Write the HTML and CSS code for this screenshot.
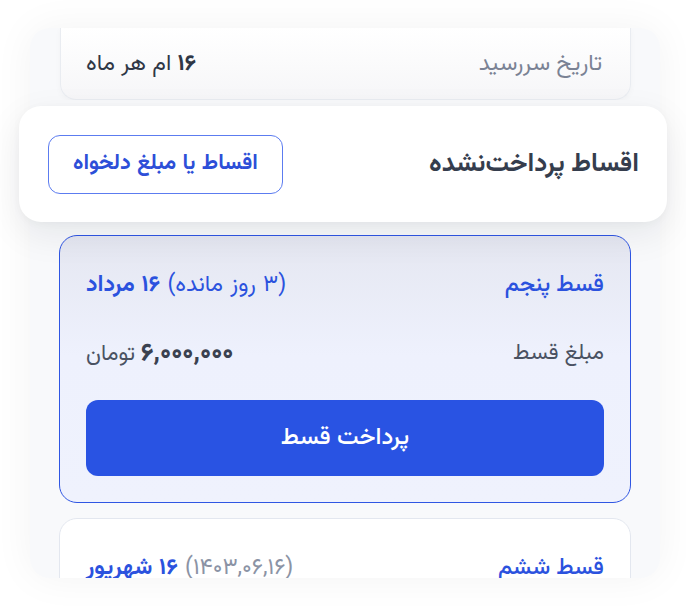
FILE: index.html
```html
<!DOCTYPE html>
<html lang="fa" dir="rtl">
<head>
<meta charset="utf-8">
<title>اقساط</title>
<link rel="stylesheet" href="styles.css">
</head>
<body>
<div class="stage">
  <div class="panel">
    <div class="clip-top">
      <div class="info-card">
        <span class="label">تاریخ سررسید</span>
        <span class="value"><b>۱۶</b> ام هر ماه</span>
      </div>
    </div>

    <div class="head-card">
      <h2 class="head-title">اقساط پرداخت‌نشده</h2>
      <button class="outline-btn">اقساط یا مبلغ دلخواه</button>
    </div>

    <div class="clip-bottom">
      <div class="inst-card active">
        <div class="row">
          <span class="inst-name">قسط پنجم</span>
          <span class="inst-date"><span class="remain">(۳ روز مانده)</span> <b>۱۶ مرداد</b></span>
        </div>
        <div class="row row-amount">
          <span class="label-dark">مبلغ قسط</span>
          <span class="amount"><b>۶,۰۰۰,۰۰۰</b> تومان</span>
        </div>
        <button class="pay-btn">پرداخت قسط</button>
      </div>

      <div class="inst-card">
        <div class="row">
          <span class="inst-name">قسط ششم</span>
          <span class="inst-date"><span class="muted">(۱۴۰۳,۰۶,۱۶)</span> <b>۱۶ شهریور</b></span>
        </div>
      </div>
    </div>
  </div>
</div>
</body>
</html>
```

FILE: styles.css
```css
* { box-sizing: border-box; }
html, body { margin: 0; padding: 0; background: #ffffff; }
body {
  font-family: "Vazirmatn", "Noto Sans Arabic", "DejaVu Sans", sans-serif;
  width: 686px;
  height: 607px;
  overflow: hidden;
}
.stage {
  padding: 28px 26px 0 30px;
}
.panel {
  width: 630px;
  height: 550px;
  display: flex;
  flex-direction: column;
  background: #f8f9fb;
  border-radius: 20px;
  box-shadow: 0 0 40px rgba(16, 24, 40, 0.05);
}
.clip-top {
  height: 72px;
  overflow: hidden;
  border-radius: 20px 20px 0 0;
  padding: 0 29px 0 30px;
}
.info-card {
  height: 72px;
  display: flex;
  align-items: center;
  justify-content: space-between;
  padding: 0 28px 0 25px;
  background: linear-gradient(#ffffff, #f6f6f8);
  border: 1px solid #e9ecf1;
  border-top: none;
  border-radius: 0 0 16px 16px;
  box-shadow: 0 2px 6px rgba(16, 24, 40, 0.03);
}
.label { font-size: 23px; color: #7a8294; }
.value { font-size: 23px; color: #2f3746; }
.value b { font-weight: 700; }

.head-card {
  margin: 6px -7px 0 -11px;
  height: 116px;
  background: #ffffff;
  border-radius: 22px;
  display: flex;
  align-items: center;
  justify-content: space-between;
  padding: 0 28px 0 29px;
  box-shadow: 0 12px 36px rgba(16, 24, 40, 0.08), 0 2px 8px rgba(16, 24, 40, 0.03);
  position: relative;
  z-index: 2;
}
.head-title {
  margin: 0;
  font-size: 26px;
  font-weight: 700;
  color: #353d4d;
}
.outline-btn {
  width: 235px;
  height: 59px;
  border: 1.5px solid #5c7cf0;
  border-radius: 12px;
  background: #ffffff;
  color: #2d4fd8;
  font-family: inherit;
  font-size: 21.5px;
  font-weight: 700;
  word-spacing: 1px;
}

.clip-bottom {
  flex: 1;
  overflow: hidden;
  border-radius: 0 0 20px 20px;
  padding: 13px 29px 0 29px;
  display: flex;
  flex-direction: column;
  gap: 15px;
}
.inst-card {
  flex-shrink: 0;
  background: #ffffff;
  border: 1.5px solid #e3e7ef;
  border-radius: 18px;
  padding: 26px 26px 26px 26px;
  display: flex;
  flex-direction: column;
}
.inst-card.active {
  background: linear-gradient(#e5e7f1, #eef1fd 45%, #eff2fd);
  border-color: #2f56e3;
}
.row {
  height: 46px;
  display: flex;
  align-items: center;
  justify-content: space-between;
}
.row-amount { margin-top: 22px; }
.inst-name { font-size: 23px; color: #2b52de; font-weight: 500; }
.inst-date { font-size: 23px; color: #2b52de; word-spacing: 1px; }
.inst-date b { font-weight: 700; }
.remain { color: #2b52de; }
.muted { color: #8b93a5; }
.label-dark { font-size: 22px; color: #4a5262; }
.amount { font-size: 22px; color: #4a5262; }
.amount b { font-weight: 800; font-size: 25px; color: #3a4150; }
.pay-btn {
  margin-top: 24px;
  height: 76px;
  border: none;
  border-radius: 12px;
  background: #2953e3;
  color: #ffffff;
  font-family: inherit;
  font-size: 24px;
  font-weight: 500;
}
```
